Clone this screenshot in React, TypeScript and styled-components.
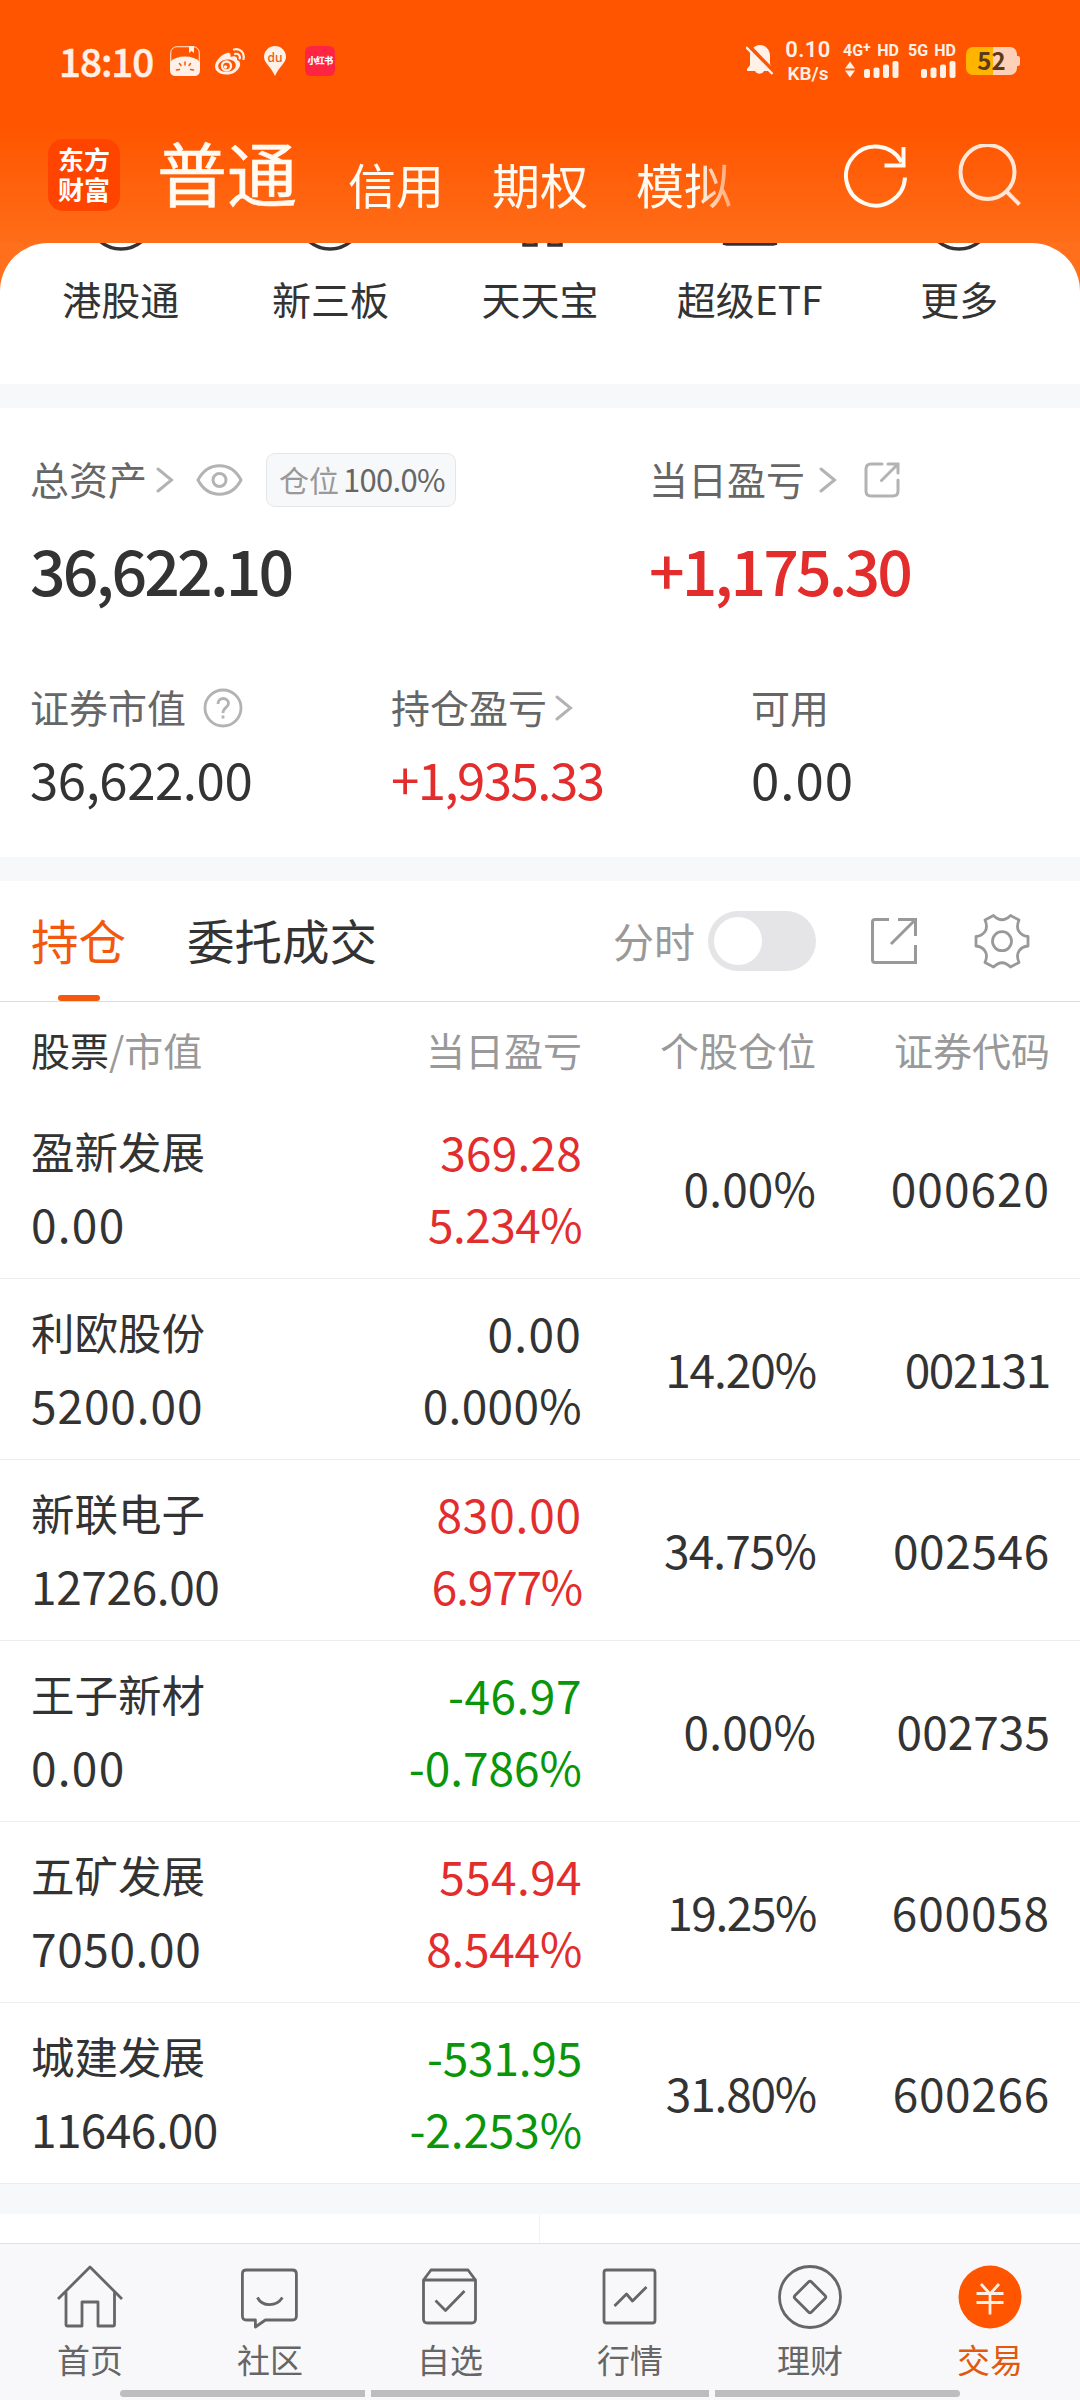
import React from "react";
import styled, { createGlobalStyle } from "styled-components";

const cjk = `"Noto Sans CJK SC", "Noto Sans", sans-serif`;

const Global = createGlobalStyle`
  * { box-sizing: border-box; }
  body { margin: 0; background: #fff; font-family: ${cjk}; color: #333; }
`;

const Screen = styled.main`
  width: 1080px;
  height: 2400px;
  display: flex;
  flex-direction: column;
  overflow: hidden;
  background: #fff;
`;

const Top = styled.header`
  height: 243px;
  flex: none;
  background: linear-gradient(#ff5500 0 125px, #ff6d18 243px);
`;

const StatusBar = styled.div`
  height: 122px;
  padding: 0 60px 0 59px;
  display: flex;
  align-items: center;
  color: #fff0e8;
`;
const Clock = styled.span`
  font-size: 38.5px;
  font-weight: 500;
  line-height: 50px;
  width: 111px;
  letter-spacing: -1px;
  -webkit-text-stroke: 0.5px currentColor;
  padding-bottom: 3px;
`;
const StatusIcons = styled.div`
  display: flex;
  align-items: center;
  svg { display: block; }
`;
const XhsIcon = styled.span`
  width: 30px;
  height: 30px;
  border-radius: 6px;
  margin-left: 19px;
  background: #ff2442;
  color: #fff;
  font: 900 9px/29px ${cjk};
  letter-spacing: -0.6px;
  text-align: center;
`;
const StatusRight = styled.div`
  margin-left: auto;
  display: flex;
  align-items: center;
`;
const Speed = styled.div`
  width: 46px;
  margin: 0 12px 0 11px;
  text-align: center;
  font-family: Roboto, sans-serif;
  font-weight: 600;
  font-size: 22px;
  line-height: 26px;
  letter-spacing: 0.4px;
  white-space: nowrap;
  small { display: block; font-size: 19px; line-height: 22px; letter-spacing: 0; }
`;
const Signal = styled.div<{ $w: number; $gap: number }>`
  width: ${(p) => p.$w}px;
  margin-right: ${(p) => p.$gap}px;
  height: 34px;
  display: flex;
  flex-direction: column;
  justify-content: space-between;
  align-items: flex-end;
`;
const SignalText = styled.div`
  width: 100%;
  display: flex;
  justify-content: space-between;
  font-family: Roboto, sans-serif;
  font-size: 16px;
  line-height: 14px;
  font-weight: 700;
  white-space: nowrap;
  sup { font-size: 14px; line-height: 0; vertical-align: 4px; }
`;
const Battery = styled.div`
  display: flex;
  align-items: center;
  span {
    width: 51px;
    height: 28px;
    border-radius: 7px;
    background: linear-gradient(90deg, #ffb400 27px, #ffd0b8 27px);
    color: #5a3a18;
    font-size: 24px;
    font-weight: 600;
    line-height: 26px;
    text-align: center;
  }
  &::after {
    content: "";
    width: 3px;
    height: 10px;
    border-radius: 0 2px 2px 0;
    background: #ffd0b8;
  }
`;

const NavHead = styled.div`
  height: 121px;
  display: flex;
  align-items: center;
  padding: 0 58px 0 48px;
`;
const Logo = styled.div`
  width: 72px;
  height: 72px;
  margin-bottom: 15px;
  border-radius: 15px;
  background: #ff4400;
  color: #fff;
  font-size: 26px;
  font-weight: 700;
  line-height: 30px;
  text-align: center;
  padding-top: 5px;
`;
const Tabs = styled.nav`
  margin-left: 37px;
  width: 600px;
  height: 121px;
  display: flex;
  align-items: flex-start;
  overflow: hidden;
  color: #fffaf2;
  mask-image: linear-gradient(90deg, #000 540px, transparent 600px);
`;
const Tab = styled.span<{ $main?: boolean }>`
  font-size: ${(p) => (p.$main ? 70 : 48)}px;
  font-weight: 400;
  -webkit-text-stroke: ${(p) => (p.$main ? 0.6 : 0)}px currentColor;
  line-height: 72px;
  margin-top: ${(p) => (p.$main ? 14 : 25)}px;
  margin-right: ${(p) => (p.$main ? 51 : 48)}px;
  white-space: nowrap;
`;
const HeadIcons = styled.div`
  margin-left: auto;
  margin-bottom: 14px;
  display: flex;
  gap: 50px;
`;

const Shortcuts = styled.section`
  height: 141px;
  flex: none;
  background: #ff6f1c;
`;
const ShortcutSheet = styled.div`
  height: 100%;
  border-radius: 48px 48px 0 0;
  background: #fff;
  padding: 0 16px;
  display: grid;
  grid-template-columns: repeat(5, 1fr);
`;
const Shortcut = styled.div`
  display: flex;
  flex-direction: column;
  align-items: center;
  svg { display: block; height: 10px; }
  span { font-size: 39px; line-height: 58px; margin-top: 16px; }
`;

const Band = styled.div<{ $h: number }>`
  height: ${(p) => p.$h}px;
  flex: none;
  background: #f7f8fa;
`;

const Summary = styled.section`
  height: 449px;
  flex: none;
  padding: 41px 32px 0 30px;
`;
const Pair = styled.div`
  display: grid;
  grid-template-columns: 619px 1fr;
  height: 228px;
`;
const Triple = styled.div`
  display: grid;
  grid-template-columns: 361px 360px 1fr;
`;
const Label = styled.div`
  height: 58px;
  display: flex;
  align-items: center;
  color: #666;
  font-size: 39px;
  line-height: 58px;
  white-space: nowrap;
  svg { display: block; flex: none; margin-top: 4px; }
`;
const Badge = styled.span`
  width: 190px;
  height: 54px;
  margin: 4px 0 0 23px;
  border: 1px solid #e5e6e9;
  border-radius: 9px;
  background: #f7f8fa;
  color: #999;
  font-size: 30px;
  line-height: 49px;
  padding-left: 12px;
  b { font-weight: 400; font-size: 31px; margin-left: 4px; color: #666; letter-spacing: -0.7px; }
`;

const tones = { dark: "#333", up: "#e32d2d", down: "#0a960a" };
type Tone = keyof typeof tones;

const glyphTrim: Record<string, number> = {
  "0": 0.03, "1": -0.11, "2": 0, "3": -0.01, "4": 0.015, "6": 0.01, "7": -0.045,
  "8": 0.01, "9": 0, "%": -0.095, ".": 0.02, "-": 0.07, ",": -0.12,
};
const tracking = (text: string, extra = 0) =>
  [...text].reduce((sum, c) => sum + (glyphTrim[c] ?? 0), 0) / text.length + extra;

const Num = styled.span.attrs<{ $text: string; $extra?: number }>((p) => ({ children: p.$text }))`
  display: block;
  white-space: nowrap;
  letter-spacing: ${(p) => tracking(p.$text, p.$extra).toFixed(4)}em;
`;

const Total = styled(Num)<{ $tone: Tone }>`
  font-size: 62.5px;
  font-weight: 500;
  line-height: 80px;
  margin-top: 22px;
  color: ${(p) => tones[p.$tone]};
`;
const Amount = styled(Num)<{ $tone: Tone }>`
  font-size: 51px;
  line-height: 70px;
  margin-top: 8px;
  color: ${(p) => tones[p.$tone]};
`;
const Gap = styled.i<{ $w: number }>`
  width: ${(p) => p.$w}px;
  flex: none;
`;

const Toolbar = styled.section`
  height: 121px;
  flex: none;
  padding: 0 50px 0 31px;
  border-bottom: 1px solid #dcdcdc;
  display: flex;
`;
const Section = styled.div<{ $on?: boolean }>`
  margin-right: 61px;
  height: 120px;
  display: flex;
  flex-direction: column;
  align-items: center;
  justify-content: space-between;
  font-size: 47.5px;
  line-height: 70px;
  padding-top: 24px;
  color: ${(p) => (p.$on ? "#f2590f" : "#333")};
  &::after {
    content: "";
    width: 42px;
    height: 6px;
    border-radius: 3px;
    background: ${(p) => (p.$on ? "#f2590f" : "transparent")};
  }
`;
const Tools = styled.div`
  margin-left: auto;
  height: 120px;
  display: flex;
  align-items: center;
  color: #999;
`;
const ToggleLabel = styled.span`
  font-size: 41px;
  line-height: 60px;
  margin-bottom: 3px;
`;
const Toggle = styled.span`
  width: 108px;
  height: 60px;
  border-radius: 30px;
  background: #e5e5e7;
  margin: 0 54px 0 13px;
  padding: 6px;
  display: flex;
  &::before {
    content: "";
    width: 48px;
    height: 48px;
    border-radius: 50%;
    background: #fff;
  }
`;

const Grid = styled.div`
  display: grid;
  grid-template-columns: 250px 1fr 234px 234px;
  padding: 0 30px 0 31px;
  flex: none;
`;
const ColumnHead = styled(Grid)`
  height: 96px;
  padding-top: 18px;
  font-size: 39px;
  line-height: 58px;
  color: #999;
  span { text-align: right; }
  span:first-child { text-align: left; }
  em { font-style: normal; color: #333; }
`;
const Holding = styled(Grid)`
  height: 181px;
  padding-top: 17px;
  border-bottom: 1px solid #ededed;
  font-size: 46px;
  line-height: 72px;
`;
const Stock = styled.div`
  font-size: 43.5px;
  ${Num} { font-size: 46px; }
`;
const Figures = styled.div<{ $tone: Tone }>`
  text-align: right;
  color: ${(p) => tones[p.$tone]};
`;
const Cell = styled.div`
  text-align: right;
  padding-top: 36px;
`;

const Peek = styled.div`
  height: 29px;
  flex: none;
  display: grid;
  grid-template-columns: 540px 540px;
  i:first-child { border-right: 1px solid #f3f3f3; }
`;
const BottomNav = styled.nav`
  height: 157px;
  flex: none;
  background: #f8f8fa;
  border-top: 1px solid #e2e2e4;
  display: flex;
  flex-direction: column;
`;
const NavItems = styled.div`
  display: grid;
  grid-template-columns: repeat(6, 180px);
  height: 146px;
`;
const NavItem = styled.div<{ $on?: boolean }>`
  display: flex;
  flex-direction: column;
  align-items: center;
  padding-top: 21px;
  color: ${(p) => (p.$on ? "#e0590f" : "#666")};
  font-size: 33px;
  line-height: 46px;
  svg { display: block; margin: 0 1px 7px 0; }
`;
const Gesture = styled.div`
  display: flex;
  gap: 6px;
  justify-content: center;
  i { height: 7px; background: #bdbdbd; width: 245px; }
  i:nth-child(2) { width: 338px; }
  i:first-child { border-radius: 4px 0 0 4px; }
  i:last-child { border-radius: 0 4px 4px 0; }
`;

const Chevron = () => (
  <svg width="18" height="26" viewBox="0 0 18 26" fill="none" stroke="#b3b3b3" strokeWidth="3" strokeLinecap="round">
    <path d="M2 2 15.500 13 2 24" />
  </svg>
);
const Bars = ({ arrows }: { arrows?: boolean }) => (
  <svg width="54" height="17" viewBox="0 0 54 17" fill="currentColor">
    {arrows && <path d="M5 .500 10 7.500H0ZM5 16.500 10 9.500H0Z" />}
    <rect x="19" y="8" width="6" height="9" rx="2" />
    <rect x="28.500" y="6.500" width="6" height="10.500" rx="2" />
    <rect x="38" y="3.500" width="6" height="13.500" rx="2" />
    <rect x="47.500" y="0" width="6" height="17" rx="2" />
  </svg>
);

const arc = <circle cx="35" cy="-26" r="32" />;
const shortcuts: [string, React.ReactNode][] = [
  ["港股通", arc],
  ["新三板", arc],
  ["天天宝", <path d="M19 0v2h12V0M44 0v2h12V0" />],
  ["超级ETF", <path d="M8 0 12 1h46l4-1" />],
  ["更多", arc],
];

const holdings: [string, string, string, string, Tone, string, string][] = [
  ["盈新发展", "0.00", "369.28", "5.234%", "up", "0.00%", "000620"],
  ["利欧股份", "5200.00", "0.00", "0.000%", "dark", "14.20%", "002131"],
  ["新联电子", "12726.00", "830.00", "6.977%", "up", "34.75%", "002546"],
  ["王子新材", "0.00", "-46.97", "-0.786%", "down", "0.00%", "002735"],
  ["五矿发展", "7050.00", "554.94", "8.544%", "up", "19.25%", "600058"],
  ["城建发展", "11646.00", "-531.95", "-2.253%", "down", "31.80%", "600266"],
];

const navItems: [string, React.ReactNode][] = [
  ["首页", <path d="M2 34 34 2 66 34M10 27V59.500Q10 61 11.500 61H26V37H42V61H57Q58.500 61 58.500 59.500V27" />],
  ["社区", <g transform="translate(-.6)"><path d="M11 5H57Q61 5 61 9V51Q61 55 57 55H30L20 62V55H11Q7 55 7 51V9Q7 5 11 5Z" /><path d="M22 32.500C27 42 41 42 47 32.500" /></g>],
  ["自选", <g transform="translate(-.5)"><path d="M8 15H60V54Q60 58 56 58H12Q8 58 8 54ZM8 15 15.500 5H52.500L60 15" /><path d="M20 35.500 30 45.500 49 26" /></g>],
  ["行情", <g transform="translate(-.5)"><rect x="8.500" y="5" width="51" height="53" rx="2.500" /><path d="M19 41 31 29 37 36 51 22" /></g>],
  ["理财", <><circle cx="34" cy="32" r="30.500" /><path d="M32.500 17Q34 15.500 35.500 17L49 30.500Q50.500 32 49 33.500L35.500 47Q34 48.500 32.500 47L19 33.500Q17.500 32 19 30.500Z" /></>],
  ["交易", <><circle cx="34" cy="32" r="31.500" fill="#ff5500" stroke="none" /><path stroke="#fff0e6" d="M25 19 34 29 43 19M20.500 28.500H47.500M20.500 37.500H47.500M34 29V49.500" /></>],
];

export default function App() {
  return (
    <Screen>
      <Global />
      <Top>
        <StatusBar>
          <Clock>18:10</Clock>
          <StatusIcons>
            <svg width="30" height="30" viewBox="0 0 30 30">
              <rect x=".75" y=".75" width="28.500" height="28.500" rx="6" fill="none" stroke="currentColor" strokeWidth="1" />
              <path d="M19 0h5v7l-2.500-2L19 7Z" fill="currentColor" />
              <path d="M0 16Q5 10.500 15 10.500T30 16V24Q30 30 24 30H6Q0 30 0 24Z" fill="currentColor" />
              <path d="M15 16v3M9.500 17.500l1.500 2M20.500 17.500l-1.500 2M6.500 24l3-.6M23.500 24l-3-.6" stroke="#ff5500" strokeWidth="1.500" strokeLinecap="round" />
            </svg>
            <svg width="30" height="30" viewBox="0 0 30 30" fill="none" stroke="currentColor" style={{ marginLeft: 15 }}>
              <path fill="currentColor" stroke="none" fillRule="evenodd" d="M12 7C15 6 16 8 15.500 11C19 9.500 23 10 22 14C25 15 26 18 24.500 21C22 26.500 16 29 11 28.500C5 28.500 0 25 0 20.500C0 15 7 8 12 7ZM12 13.500C6.500 14 3 17 3.200 20.500S7.500 26.200 12.500 25.800S21 22.500 20.800 19S17 13 12 13.500Z" />
              <circle cx="11.500" cy="20" r="4.500" strokeWidth="2.400" />
              <circle cx="10.500" cy="21" r="1.800" fill="currentColor" stroke="none" />
              <path d="M19 3.500C25 1.500 30 7 28.500 13M20 8C23 7 25.500 9.500 24.700 12.500" strokeWidth="2.200" strokeLinecap="round" />
            </svg>
            <svg width="22" height="30" viewBox="0 0 22 30" style={{ marginLeft: 19 }}>
              <path fill="currentColor" d="M11 0A11 11 0 0 1 22 11C22 17 14 22 11 30C8 22 0 17 0 11A11 11 0 0 1 11 0Z" />
              <text x="11" y="15.500" textAnchor="middle" fontSize="12" fontWeight="500" fontFamily="Noto Sans" fill="#e85a10">du</text>
            </svg>
            <XhsIcon>小红书</XhsIcon>
          </StatusIcons>
          <StatusRight>
            <svg width="28" height="32" viewBox="0 0 28 32">
              <path fill="currentColor" d="M14 0C20 0 24 5 24 11V19L26 24V26H18A5 5 0 0 1 9 26H1V24L4 20V11C4 5 8 0 14 0Z" />
              <path d="M2 0 28 27" stroke="#ff5500" strokeWidth="4" />
              <path d="M0 2 26.500 29" stroke="currentColor" strokeWidth="2.400" />
            </svg>
            <Speed>0.10<small>KB/s</small></Speed>
            <Signal $w={56} $gap={9}>
              <SignalText><span>4G<sup>+</sup></span><span>HD</span></SignalText>
              <Bars arrows />
            </Signal>
            <Signal $w={48} $gap={10}>
              <SignalText><span>5G</span><span>HD</span></SignalText>
              <Bars />
            </Signal>
            <Battery><span>52</span></Battery>
          </StatusRight>
        </StatusBar>
        <NavHead>
          <Logo>东方<br />财富</Logo>
          <Tabs>
            <Tab $main>普通</Tab>
            <Tab>信用</Tab>
            <Tab>期权</Tab>
            <Tab>模拟</Tab>
          </Tabs>
          <HeadIcons>
            <svg width="64" height="64" viewBox="0 0 64 64" fill="none" stroke="#fffaf2" strokeWidth="4">
              <path d="M61 33.500A29.500 29.500 0 1 1 57.500 18" />
              <path d="M59.500 3V21.500H40.500" />
            </svg>
            <svg width="64" height="64" viewBox="0 0 64 64" fill="none" stroke="#ffe6d6" strokeWidth="4">
              <circle cx="29.500" cy="28" r="27" />
              <path d="M48 47 61.500 60.500" />
            </svg>
          </HeadIcons>
        </NavHead>
      </Top>

      <Shortcuts>
        <ShortcutSheet>
          {shortcuts.map(([name, icon]) => (
            <Shortcut key={name}>
              <svg width="70" viewBox="0 0 70 10" fill="none" stroke="#333" strokeWidth="3.500">{icon}</svg>
              <span>{name}</span>
            </Shortcut>
          ))}
        </ShortcutSheet>
      </Shortcuts>
      <Band $h={24} />

      <Summary>
        <Pair>
          <div>
            <Label>
              总资产<Gap $w={9} /><Chevron /><Gap $w={22} />
              <svg width="47" height="34" viewBox="0 0 47 34" fill="none" stroke="#b3b3b3" strokeWidth="3">
                <path d="M2 17C12 -2 35 -2 45 17C35 36 12 36 2 17Z" strokeLinejoin="round" />
                <circle cx="23.500" cy="17" r="6.500" />
              </svg>
              <Badge>仓位<b>100.0%</b></Badge>
            </Label>
            <Total $tone="dark" $text="36,622.10" $extra={-0.026} />
          </div>
          <div>
            <Label>
              当日盈亏<Gap $w={14} /><Chevron /><Gap $w={27} />
              <svg width="36" height="36" viewBox="0 0 36 36" fill="none" stroke="#b3b3b3" strokeWidth="3" strokeLinecap="round">
                <path d="M18 2H7Q2 2 2 7V29Q2 34 7 34H29Q34 34 34 29V18M24 2H34V11M34 2 17.500 18.500" />
              </svg>
            </Label>
            <Total $tone="up" $text="+1,175.30" $extra={-0.007} />
          </div>
        </Pair>
        <Triple>
          <div>
            <Label>
              证券市值<Gap $w={17} />
              <svg width="40" height="40" viewBox="0 0 40 40" fill="none" stroke="#b3b3b3" strokeWidth="2.800">
                <circle cx="20" cy="20" r="18" />
                <path d="M15 16C15 8.500 25.500 9 25.500 15.500C25.500 19.500 20 19.500 20 25M20 27.500V30.500" />
              </svg>
            </Label>
            <Amount $tone="dark" $text="36,622.00" $extra={-0.006} />
          </div>
          <div>
            <Label>持仓盈亏<Gap $w={8} /><Chevron /></Label>
            <Amount $tone="up" $text="+1,935.33" $extra={-0.004} />
          </div>
          <div>
            <Label>可用</Label>
            <Amount $tone="dark" $text="0.00" $extra={-0.008} />
          </div>
        </Triple>
      </Summary>
      <Band $h={24} />

      <Toolbar>
        <Section $on>持仓</Section>
        <Section>委托成交</Section>
        <Tools>
          <ToggleLabel>分时</ToggleLabel>
          <Toggle />
          <svg width="48" height="48" viewBox="0 0 48 48" fill="none" stroke="#999" strokeWidth="3">
            <path d="M19 2.500H5Q2.500 2.500 2.500 5V43Q2.500 45.500 5 45.500H45.500V28M28 2.500H45.500V19M45.500 2.500 21 27" />
          </svg>
          <Gap $w={56} />
          <svg width="56" height="56" viewBox="0 0 56 56" fill="none" stroke="#999" strokeWidth="2.800" strokeLinejoin="round">
            <path d="M19.500 2.500Q28 11 36.500 2.500L45 7Q42 14 45 18.500Q48 23 54 23.500V33Q48 33.500 45 38Q42 42.500 45 49.500L36.500 54Q28 45.500 19.500 54L11 49.500Q14 42.500 11 38Q8 33.500 2 33V23.500Q8 23 11 18.500Q14 14 11 7Z" />
            <circle cx="28" cy="28.200" r="9.500" />
          </svg>
        </Tools>
      </Toolbar>

      <ColumnHead>
        <span><em>股票</em>/市值</span>
        <span>当日盈亏</span>
        <span>个股仓位</span>
        <span>证券代码</span>
      </ColumnHead>
      {holdings.map(([name, value, profit, rate, tone, share, code]) => (
        <Holding key={code}>
          <Stock>{name}<Num $text={value} /></Stock>
          <Figures $tone={tone}><Num $text={profit} /><Num $text={rate} /></Figures>
          <Cell><Num $text={share} /></Cell>
          <Cell><Num $text={code} /></Cell>
        </Holding>
      ))}
      <Band $h={30} />
      <Peek><i /><i /></Peek>

      <BottomNav>
        <NavItems>
          {navItems.map(([name, icon], i) => (
            <NavItem key={name} $on={i === 5}>
              <svg width="68" height="64" viewBox="0 0 68 64" fill="none" stroke="#666" strokeWidth="2.800" strokeLinejoin="round">{icon}</svg>
              {name}
            </NavItem>
          ))}
        </NavItems>
        <Gesture><i /><i /><i /></Gesture>
      </BottomNav>
    </Screen>
  );
}
